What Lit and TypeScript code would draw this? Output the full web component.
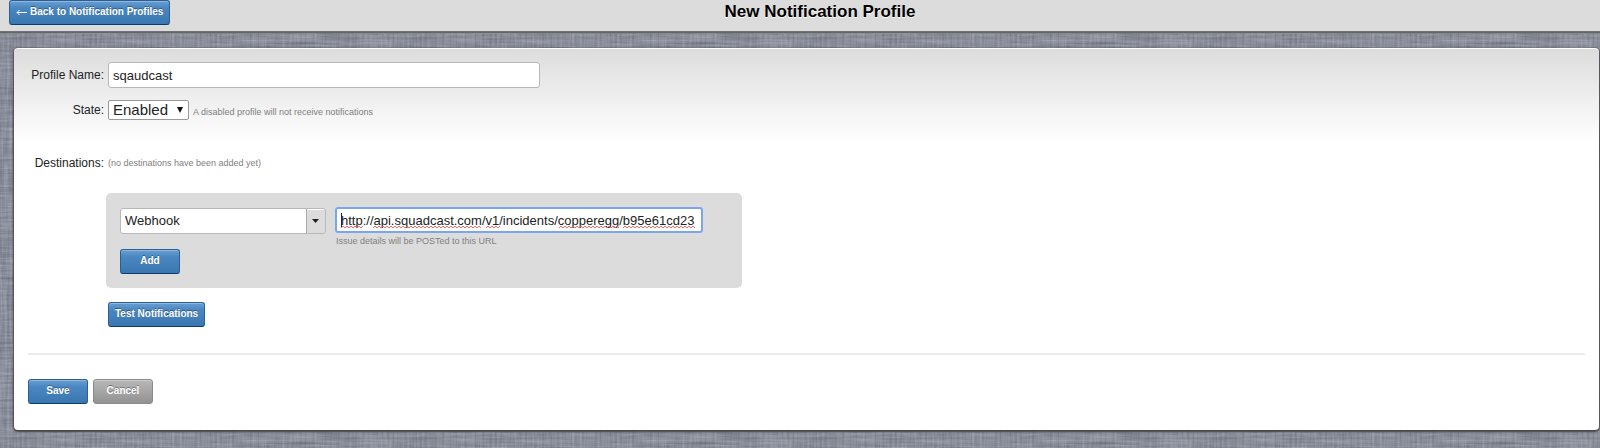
import { LitElement, html, css, svg } from "lit";
import { customElement, state } from "lit/decorators.js";

/** Zigzag path used to mark unknown words, from x1 to x2. */
function squiggle(x1: number, x2: number): string {
  let d = `M${x1} 3`;
  let up = true;
  for (let x = x1 + 2; x <= x2; x += 2) {
    d += `L${x} ${up ? 1 : 3}`;
    up = !up;
  }
  return d;
}

const UNKNOWN_WORDS: [number, number][] = [
  [0, 22],
  [32, 140],
  [145, 159],
  [218, 279],
  [282, 354],
];

@customElement("app-root")
export class AppRoot extends LitElement {
  @state() private profileName = "sqaudcast";
  @state() private url = "http://api.squadcast.com/v1/incidents/copperegg/b95e61cd23";

  static styles = css`
    :host {
      display: block;
      min-height: 100vh;
      box-sizing: border-box;
      overflow: hidden;
      padding-bottom: 17px;
      font: 12px/16px "Liberation Sans", Arial, sans-serif;
      color: #222;
      background-color: #8f939f;
      background-image: url("data:image/svg+xml,%3Csvg xmlns='http://www.w3.org/2000/svg' width='400' height='400' color-interpolation-filters='sRGB'%3E%3Cfilter id='a' x='0' y='0' width='1' height='1'%3E%3CfeTurbulence type='fractalNoise' baseFrequency='.4 .025' numOctaves='3' seed='4' stitchTiles='stitch'/%3E%3CfeColorMatrix values='1 0 0 0 0 1 0 0 0 .02 1 0 0 0 .06 0 0 0 0 .2'/%3E%3C/filter%3E%3Cfilter id='b' x='0' y='0' width='1' height='1'%3E%3CfeTurbulence type='fractalNoise' baseFrequency='.025 .4' numOctaves='3' seed='9' stitchTiles='stitch'/%3E%3CfeColorMatrix values='1 0 0 0 0 1 0 0 0 .02 1 0 0 0 .06 0 0 0 0 .2'/%3E%3C/filter%3E%3Crect width='400' height='400' filter='url(%23a)'/%3E%3Crect width='400' height='400' filter='url(%23b)'/%3E%3C/svg%3E");
    }
    .bar {
      display: grid;
      grid-template-columns: 1fr auto 1fr;
      align-items: start;
      padding: 0 0 6px 9px;
      background: #dcdcdc;
      border-bottom: 1px solid #707070;
      box-shadow: 0 1px 1px #666;
    }
    .title {
      margin: 0;
      padding-left: 31px;
      font-size: 17px;
      line-height: 24px;
      color: #000;
      text-shadow: 0 1px 0 #fff;
    }
    .btn {
      justify-self: start;
      box-sizing: border-box;
      min-width: 60px;
      height: 25px;
      padding: 0 6px 1px;
      font: bold 10px/14px "Liberation Sans", Arial, sans-serif;
      color: #fff;
      text-align: center;
      text-decoration: none;
      text-shadow: 0 -1px 0 rgba(0, 0, 0, 0.35);
      white-space: nowrap;
      border: 1px solid #2c5f92;
      border-bottom-color: #0b3c6e;
      border-radius: 3px;
      background: linear-gradient(#6a9fd2, #4a87c0 30%, #3a76b0);
      box-shadow: inset 0 1px 0 #8db7df;
      cursor: pointer;
    }
    .back {
      display: flex;
      align-items: center;
      gap: 3px;
    }
    .grey {
      border-color: #8a8a8a;
      background: linear-gradient(#b8b8b8, #929292);
      box-shadow: inset 0 1px 0 #ccc;
    }
    .card {
      margin: 16px 1px 0 14px;
      padding: 14px 14px 26px;
      background: #fff linear-gradient(#dcdcdc, #fff 94px) no-repeat;
      border-radius: 4px;
      box-shadow: inset 0 1px 0 #fff, 0 1px 2px 1px #444;
    }
    .row {
      display: grid;
      grid-template-columns: 76px 1fr;
      column-gap: 4px;
      align-items: center;
    }
    .row + .row {
      margin-top: 12px;
    }
    .row.dest {
      margin-top: 35px;
    }
    .label {
      text-align: right;
      white-space: nowrap;
    }
    .inline {
      display: flex;
      align-items: last baseline;
      gap: 4px;
    }
    .hint {
      font-size: 9px;
      line-height: 12px;
      color: #808080;
    }
    .text,
    .select {
      box-sizing: border-box;
      margin: 0;
      height: 26px;
      padding: 0 4px;
      font: 13px/18px "Liberation Sans", Arial, sans-serif;
      color: #222;
      background-color: #fff;
      border: 1px solid #b8b8b8;
      border-radius: 3px;
      outline: none;
    }
    .select {
      appearance: none;
      background-repeat: no-repeat;
    }
    .name {
      width: 432px;
      max-width: 100%;
    }
    .state {
      width: 81px;
      height: 20px;
      font-size: 15px;
      border-color: #999;
      border-radius: 2px;
      background-image: url("data:image/svg+xml,%3Csvg xmlns='http://www.w3.org/2000/svg' width='6' height='6'%3E%3Cpath d='M0 0h6L3 6z' fill='%23111'/%3E%3C/svg%3E");
      background-position: right 5px center;
    }
    .panel {
      box-sizing: border-box;
      max-width: 636px;
      margin: 22px 0 0 78px;
      padding: 14px;
      background: #dcdcdc;
      border-radius: 5px;
    }
    .target {
      display: flex;
      align-items: flex-start;
      gap: 9px;
    }
    .kind {
      width: 206px;
      margin-top: 1px;
      background-image: url("data:image/svg+xml,%3Csvg xmlns='http://www.w3.org/2000/svg' width='19' height='24'%3E%3Cpath fill='%23dcdcdc' d='M0 0h19v24H0z'/%3E%3Cpath fill='%23aaa' d='M0 0h1v24H0z'/%3E%3Cpath fill='%23fff' d='M1 0h18v1H1z'/%3E%3Cpath d='M6 10h7l-3.500 4z' fill='%23222'/%3E%3C/svg%3E");
      background-position: right center;
    }
    .field {
      display: grid;
      gap: 2px;
      position: relative;
    }
    .field .hint {
      padding-left: 1px;
    }
    .url {
      width: 368px;
      border: 2px solid #7ca6ec;
    }
    .marks {
      position: absolute;
      left: 6px;
      top: 5px;
      pointer-events: none;
    }
    .add {
      margin-top: 2px;
    }
    .test {
      margin: 14px 0 0 80px;
    }
    .rule {
      height: 2px;
      margin: 26px 0 24px;
      border: 0;
      background: #ebebeb;
    }
    .actions {
      display: flex;
      gap: 5px;
    }
  `;

  render() {
    return html`
      <header class="bar">
        <a class="btn back" href="#profiles">
          <svg width="11" height="7" viewBox="0 0 11 7" fill="none" stroke="#fff" aria-hidden="true">
            <path d="M11 3.500H1M3.500 1L1 3.500 3.500 6" />
          </svg>
          Back to Notification Profiles
        </a>
        <h1 class="title">New Notification Profile</h1>
      </header>
      <form class="card" @submit=${(e: Event) => e.preventDefault()}>
        <div class="row">
          <label class="label" for="name">Profile Name:</label>
          <input class="text name" id="name" type="text" .value=${this.profileName} />
        </div>
        <div class="row">
          <label class="label" for="state">State:</label>
          <div class="inline">
            <select class="select state" id="state">
              <option>Enabled</option>
              <option>Disabled</option>
            </select>
            <span class="hint">A disabled profile will not receive notifications</span>
          </div>
        </div>
        <div class="row dest">
          <span class="label">Destinations:</span>
          <span class="hint">(no destinations have been added yet)</span>
        </div>
        <div class="panel">
          <div class="target">
            <select class="select kind" aria-label="Destination type">
              <option>Webhook</option>
            </select>
            <div class="field">
              <input class="text url" id="url" type="text" spellcheck="false" .value=${this.url} />
              <label class="hint" for="url">Issue details will be POSTed to this URL</label>
              <svg class="marks" width="357" height="19" aria-hidden="true">
                <path d="M.5 1v14" stroke="#222" />
                <g transform="translate(0 13)" fill="none" stroke="#f25c5c" stroke-width=".9">
                  ${UNKNOWN_WORDS.map(([a, b]) => svg`<path d=${squiggle(a, b)} />`)}
                </g>
              </svg>
            </div>
          </div>
          <button class="btn add" type="button">Add</button>
        </div>
        <button class="btn test" type="button">Test Notifications</button>
        <hr class="rule" />
        <div class="actions">
          <button class="btn" type="submit">Save</button>
          <button class="btn grey" type="button">Cancel</button>
        </div>
      </form>
    `;
  }
}
